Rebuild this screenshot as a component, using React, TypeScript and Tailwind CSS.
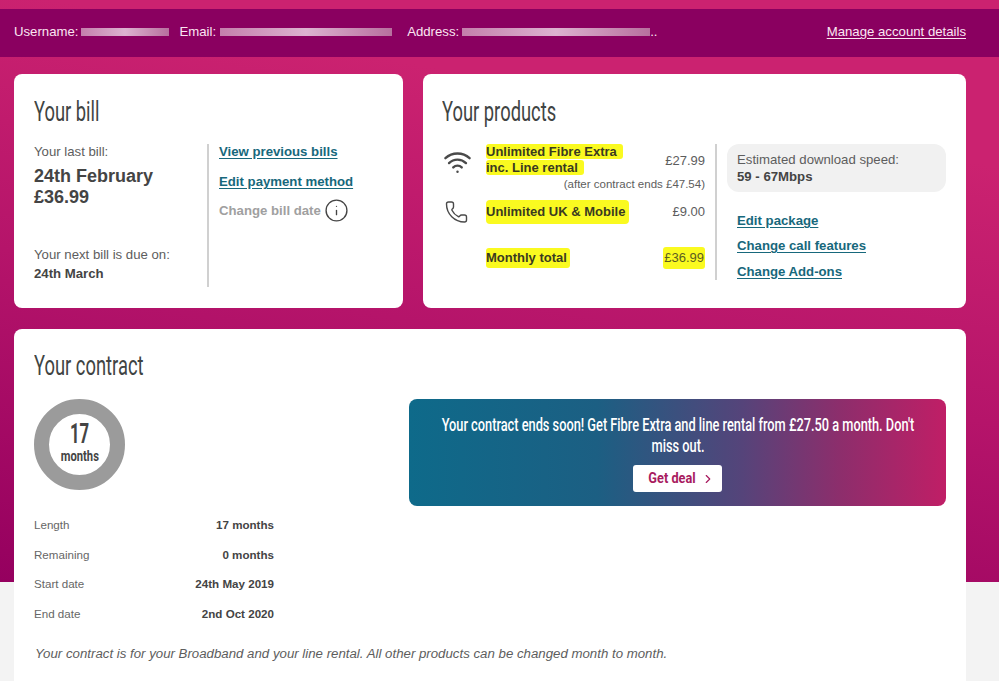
import { Wifi, Phone, Info, ChevronRight } from "lucide-react";

const narrow = "font-['Roboto',sans-serif]";
const heading = `${narrow} inline-block origin-left scale-x-[.68] text-[27px] leading-[36px] text-[#3f4443]`;
const link = "font-bold text-[13.2px] text-[#17687c] underline underline-offset-2";

function Smudge({ w }: { w: string }) {
  return <span className={`inline-block h-[8px] bg-gradient-to-r from-[#c47fac] via-[#dcb2d0] to-[#b76f9e] ${w}`} />;
}

function Row({ label, value }: { label: string; value: string }) {
  return (
    <div className="flex h-[29.6px] w-[240px] items-center justify-between text-[11.6px]">
      <span className="text-[#666]">{label}</span>
      <span className="font-bold text-[#444]">{value}</span>
    </div>
  );
}

export default function App() {
  return (
    <div className="h-[681px] w-[999px] overflow-hidden bg-[#f3f3f3] bg-[linear-gradient(190deg,#cb2270_0%,#cb2270_22%,#b5146a_56%,#95005f_100%)] bg-[length:100%_582px] bg-no-repeat pt-[9px] font-['Liberation_Sans',Arial,sans-serif] text-[#444]">
      <div className="flex h-[48px] items-center bg-[#8a0060] pb-[2px] pl-[14px] pr-[33px] text-[13.2px] text-[#fbe6f2]">
        <span>Username:</span>
        <Smudge w="ml-[2px] w-[88px]" />
        <span className="ml-[11px]">Email:</span>
        <Smudge w="ml-[4px] w-[172px]" />
        <span className="ml-[15px]">Address:</span>
        <Smudge w="ml-[3px] w-[188px]" />
        <span>..</span>
        <a className="ml-auto underline underline-offset-2">Manage account details</a>
      </div>

      <div className="flex gap-[20px] pl-[14px] pr-[33px] pt-[17px]">
        <section className="h-[234px] w-[389px] rounded-[8px] bg-white pl-[20px] pt-[20px]">
          <h2 className={heading}>Your bill</h2>
          <div className="mt-[14px] flex">
            <div className="flex h-[143px] w-[175px] flex-col border-r-2 border-[#d0d0d0] text-[13.2px] leading-[16px] text-[#5d5d5d]">
              <span>Your last bill:</span>
              <strong className="mt-[6px] text-[18px] leading-[21px] text-[#444]">24th February<br />£36.99</strong>
              <span className="mt-[39px]">Your next bill is due on:</span>
              <strong className="mt-[3px] text-[#444]">24th March</strong>
            </div>
            <div className="flex flex-col pl-[10px] leading-[16px]">
              <a className={link}>View previous bills</a>
              <a className={`${link} mt-[14px]`}>Edit payment method</a>
              <div className="mt-[8px] flex items-center gap-[3px] text-[13.2px] font-bold text-[#a0a0a0]">
                Change bill date <Info size={25} strokeWidth={1.3} className="text-[#444]" />
              </div>
            </div>
          </div>
        </section>

        <section className="h-[234px] w-[543px] rounded-[8px] bg-white pl-[20px] pt-[20px]">
          <h2 className={`${heading} -ml-[1px]`}>Your products</h2>
          <div className="mt-[14px] flex">
            <div className="flex h-[136px] w-[274px] flex-col border-r-2 border-[#d0d0d0] pr-[10px] text-[13px]">
              <div className="flex">
                <Wifi size={30} strokeWidth={2} className="mt-[3px] w-[43px] shrink-0 pr-[14px] text-[#4a4a4a]" />
                <strong className="leading-[16px] text-[#3a3a20]">
                  <span className="rounded-[3px] bg-[#fafa20] pr-[6px]">Unlimited Fibre Extra</span><br />
                  <span className="rounded-[3px] bg-[#fafa20] pr-[6px]">inc. Line rental</span>
                </strong>
                <span className="ml-auto pt-[7px] text-[#5d5d5d]">£27.99</span>
              </div>
              <div className="text-right text-[11.5px] leading-[14px] text-[#5d5d5d]">(after contract ends £47.54)</div>
              <div className="mt-[9px] flex items-center">
                <Phone size={24} strokeWidth={1.4} className="w-[43px] shrink-0 pr-[16px] text-[#4a4a4a]" />
                <strong className="rounded-[4px] bg-[#fafa20] py-[2px] pr-[4px] text-[#3a3a20]">Unlimited UK &amp; Mobile</strong>
                <span className="ml-auto text-[#5d5d5d]">£9.00</span>
              </div>
              <div className="mt-[23px] flex items-center pl-[43px]">
                <strong className="rounded-[3px] bg-[#fafa20] pr-[3px] text-[#3a3a20]">Monthly total</strong>
                <span className="ml-auto rounded-[3px] bg-[#fafa20] px-[1px] py-[1px] text-[#5d5d20]">£36.99</span>
              </div>
            </div>
            <div className="ml-[10px] flex w-[219px] flex-col">
              <div className="h-[48px] rounded-[12px] bg-[#f1f1f1] pl-[10px] pt-[7px] text-[13.2px] leading-[17px] text-[#5d5d5d]">
                Estimated download speed:<br />
                <strong className="text-[#444]">59 - 67Mbps</strong>
              </div>
              <div className="flex flex-col gap-[5.5px] pl-[10px] pt-[19px]">
                <a className={link}>Edit package</a>
                <a className={link}>Change call features</a>
                <a className={link}>Change Add-ons</a>
              </div>
            </div>
          </div>
        </section>
      </div>

      <section className="ml-[14px] mt-[21px] h-[400px] w-[952px] rounded-t-[8px] bg-white pl-[20px] pt-[19px]">
        <h2 className={heading}>Your contract</h2>
        <div className="mt-[15px] flex items-start">
          <div className="flex h-[91px] w-[91px] flex-col items-center justify-center rounded-full border-[15px] border-[#9b9b9b] pb-[4px]">
            <span className={`${narrow} scale-x-[.62] text-[27px] font-bold leading-[26px]`}>17</span>
            <span className={`${narrow} scale-x-[.8] text-[14px] font-bold leading-[18px]`}>months</span>
          </div>
          <div className="ml-[284px] flex h-[107px] w-[537px] flex-col items-center rounded-[8px] bg-[linear-gradient(90deg,#0e6a8a_0%,#1c5f83_35%,#55447a_62%,#8c2e6c_80%,#c01e66_100%)] pt-[15px]">
            <p className={`${narrow} w-[680px] shrink-0 scale-x-[.71] text-center text-[18px] font-medium leading-[21px] text-white`}>
              Your contract ends soon! Get Fibre Extra and line rental from £27.50 a month. Don't miss out.
            </p>
            <a className="mt-[9px] flex h-[27px] w-[89px] items-center justify-center gap-[5px] rounded-[3px] bg-white text-[#a81b5f]">
              <span className={`${narrow} origin-right scale-x-[.85] text-[15px] font-bold`}>Get deal</span>
              <ChevronRight size={14} strokeWidth={2} />
            </a>
          </div>
        </div>
        <div className="mt-[4px]">
          <Row label="Length" value="17 months" />
          <Row label="Remaining" value="0 months" />
          <Row label="Start date" value="24th May 2019" />
          <Row label="End date" value="2nd Oct 2020" />
        </div>
        <p className="mt-[16px] pl-[1px] text-[13.25px] italic text-[#5d5d5d]">
          Your contract is for your Broadband and your line rental. All other products can be changed month to month.
        </p>
      </section>
    </div>
  );
}
